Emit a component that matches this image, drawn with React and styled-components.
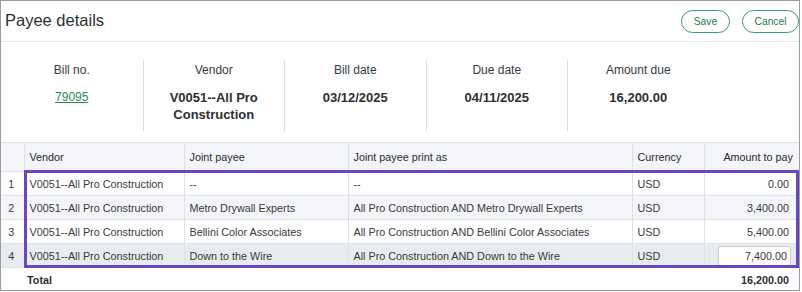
import React from 'react';
import styled, { createGlobalStyle } from 'styled-components';

const GlobalStyle = createGlobalStyle`
  body {
    margin: 0;
    background: #fff;
    font-family: Arial, 'Liberation Sans', Helvetica, sans-serif;
    color: #393a3d;
  }
`;

const Frame = styled.div`
  width: 800px;
  height: 291px;
  box-sizing: border-box;
  border: 1px solid #9c9c9c;
  background: #fff;
  display: flex;
  flex-direction: column;
  overflow: hidden;
`;

const Header = styled.div`
  height: 40px;
  flex-shrink: 0;
  display: flex;
  align-items: center;
  justify-content: space-between;
  padding-left: 4px;
  border-bottom: 1px solid #e4e6e8;
`;

const Title = styled.h1`
  margin: 0;
  font-size: 16.5px;
  font-weight: normal;
  color: #2e2f31;
  padding-bottom: 1px;
`;

const Actions = styled.div`
  display: flex;
  gap: 12px;
  align-self: flex-start;
  margin-top: 9px;
`;

const Button = styled.button`
  height: 23px;
  width: ${(p) => p.$w}px;
  box-sizing: border-box;
  border: 1px solid #3a9c6c;
  border-radius: 12px;
  background: #fff;
  color: #1f7b4e;
  font-family: Arial, 'Liberation Sans', sans-serif;
  font-size: 10.3px;
  padding: 0;
  cursor: pointer;
`;

const Summary = styled.div`
  height: 100px;
  flex-shrink: 0;
  display: grid;
  grid-template-columns: repeat(5, 141.5px);
  padding-top: 18px;
  box-sizing: border-box;
`;

const SummaryItem = styled.div`
  height: 71px;
  display: flex;
  flex-direction: column;
  align-items: center;
  text-align: center;
  padding: 0 12px;
  box-sizing: border-box;
  border-left: ${(p) => (p.$first ? 'none' : '1px solid #dcdfe2')};
`;

const Label = styled.div`
  font-size: 12px;
  color: #393a3d;
  margin-top: 3px;
  line-height: 14px;
`;

const Value = styled.div`
  font-size: 13px;
  font-weight: bold;
  color: #2e2f31;
  margin-top: 12px;
  line-height: 17px;
`;

const BillLink = styled.a`
  font-size: 12px;
  color: #2b8a5a;
  text-decoration: underline;
  margin-top: 13px;
  line-height: 15px;
`;

const TableWrap = styled.div`
  position: relative;
  flex: 1;
`;

const Table = styled.table`
  width: 100%;
  border-collapse: collapse;
  table-layout: fixed;
  font-size: 10.8px;
  color: #393a3d;
`;

const HeadCell = styled.th`
  height: 28px;
  background: #f4f5f8;
  font-weight: normal;
  color: #2a2b2d;
  text-align: ${(p) => (p.$right ? 'right' : 'left')};
  padding: 0 ${(p) => (p.$right ? '6px' : '4px')} 0 5px;
  border: 1px solid #dfe2e5;
  &:first-child { border-left: none; }
  &:last-child { border-right: none; }
`;

const Row = styled.tr`
  height: 24px;
  background: ${(p) => p.$bg};
`;

const Cell = styled.td`
  padding: 0 ${(p) => (p.$right ? '10px' : '4px')} 0 ${(p) => (p.$num ? '2px' : '5px')};
  text-align: ${(p) => (p.$num ? 'center' : p.$right ? 'right' : 'left')};
  border: 1px solid #dfe2e5;
  white-space: nowrap;
  overflow: hidden;
  &:first-child { border-left: none; }
  &:last-child { border-right: none; }
`;

const TotalCell = styled.td`
  height: 23px;
  font-weight: bold;
  color: #2e2f31;
  text-align: ${(p) => (p.$right ? 'right' : 'left')};
  padding: 0 ${(p) => (p.$right ? '10px' : '0')} 0 0;
`;

const AmountInput = styled.div`
  margin-left: auto;
  width: 73px;
  height: 20px;
  box-sizing: border-box;
  border: 1px solid #c9cdd1;
  border-radius: 3px;
  background: #fff;
  display: flex;
  align-items: center;
  justify-content: flex-end;
  padding-right: 3px;
  margin-right: -2px;
`;

const Highlight = styled.div`
  position: absolute;
  left: 23px;
  top: 28px;
  width: 775px;
  height: 98px;
  box-sizing: border-box;
  border: 3px solid #6b45c2;
  pointer-events: none;
`;

const rows = [
  { n: 1, payee: '--', printAs: '--', amount: '0.00', bg: '#ffffff' },
  { n: 2, payee: 'Metro Drywall Experts', printAs: 'All Pro Construction AND Metro Drywall Experts', amount: '3,400.00', bg: '#f4f5f8' },
  { n: 3, payee: 'Bellini Color Associates', printAs: 'All Pro Construction AND Bellini Color Associates', amount: '5,400.00', bg: '#ffffff' },
  { n: 4, payee: 'Down to the Wire', printAs: 'All Pro Construction AND Down to the Wire', amount: '7,400.00', bg: '#e8ecee', editing: true },
];

export default function App() {
  return (
    <>
      <GlobalStyle />
      <Frame>
        <Header>
          <Title>Payee details</Title>
          <Actions>
            <Button $w={49}>Save</Button>
            <Button $w={57}>Cancel</Button>
          </Actions>
        </Header>

        <Summary>
          <SummaryItem $first>
            <Label>Bill no.</Label>
            <BillLink href="#">79095</BillLink>
          </SummaryItem>
          <SummaryItem>
            <Label>Vendor</Label>
            <Value>V0051--All Pro Construction</Value>
          </SummaryItem>
          <SummaryItem>
            <Label>Bill date</Label>
            <Value>03/12/2025</Value>
          </SummaryItem>
          <SummaryItem>
            <Label>Due date</Label>
            <Value>04/11/2025</Value>
          </SummaryItem>
          <SummaryItem>
            <Label>Amount due</Label>
            <Value>16,200.00</Value>
          </SummaryItem>
        </Summary>

        <TableWrap>
          <Table>
            <colgroup>
              <col style={{ width: 23 }} />
              <col style={{ width: 160 }} />
              <col style={{ width: 164 }} />
              <col style={{ width: 284 }} />
              <col style={{ width: 72 }} />
              <col />
            </colgroup>
            <thead>
              <tr>
                <HeadCell />
                <HeadCell>Vendor</HeadCell>
                <HeadCell>Joint payee</HeadCell>
                <HeadCell>Joint payee print as</HeadCell>
                <HeadCell>Currency</HeadCell>
                <HeadCell $right>Amount to pay</HeadCell>
              </tr>
            </thead>
            <tbody>
              {rows.map((r) => (
                <Row key={r.n} $bg={r.bg}>
                  <Cell $num>{r.n}</Cell>
                  <Cell>V0051--All Pro Construction</Cell>
                  <Cell>{r.payee}</Cell>
                  <Cell>{r.printAs}</Cell>
                  <Cell>USD</Cell>
                  <Cell $right>
                    {r.editing ? <AmountInput>{r.amount}</AmountInput> : r.amount}
                  </Cell>
                </Row>
              ))}
              <tr>
                <TotalCell />
                <TotalCell>&nbsp;Total</TotalCell>
                <TotalCell />
                <TotalCell />
                <TotalCell />
                <TotalCell $right>16,200.00</TotalCell>
              </tr>
            </tbody>
          </Table>
          <Highlight />
        </TableWrap>
      </Frame>
    </>
  );
}
